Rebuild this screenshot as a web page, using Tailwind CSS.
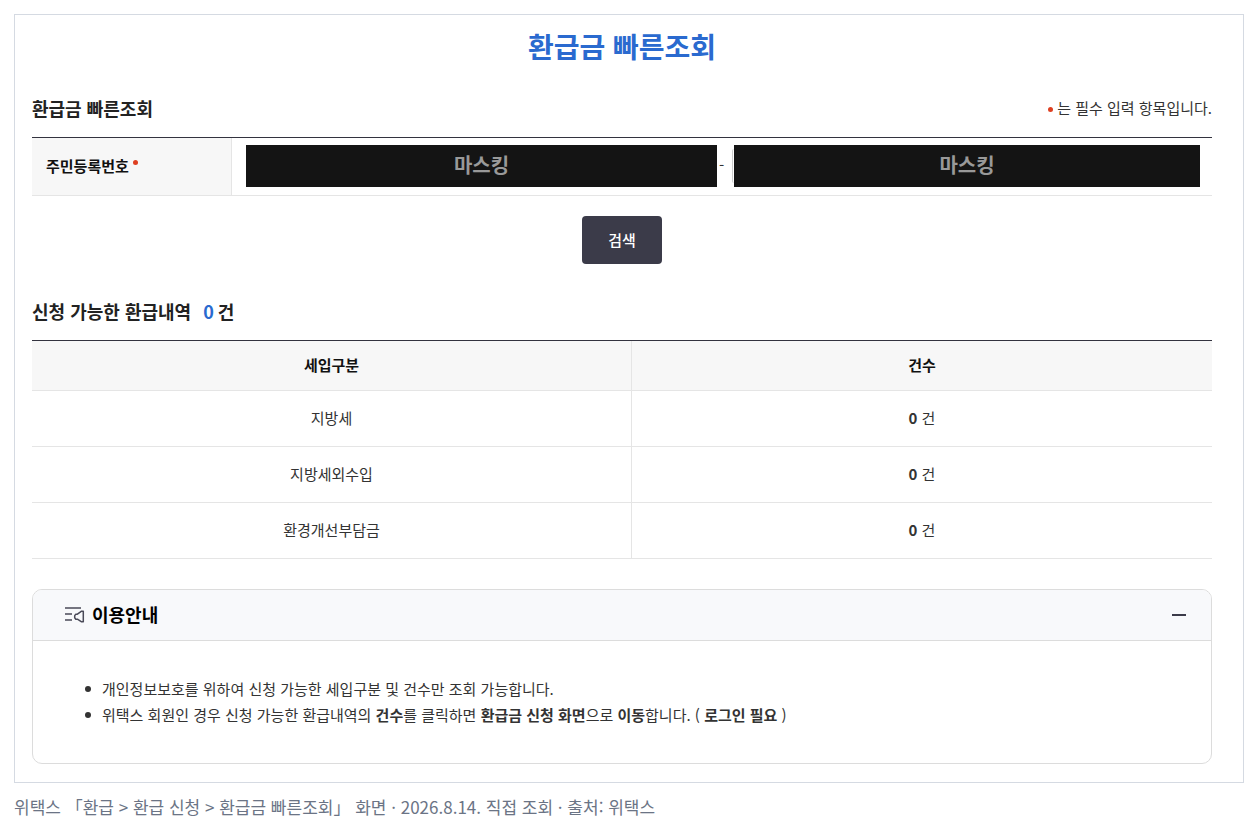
<!DOCTYPE html>
<html lang="ko">
<head>
  <meta charset="UTF-8">
  <meta name="viewport" content="width=device-width, initial-scale=1.0">
  <title>환급금 빠른조회</title>
  <script src="https://cdn.jsdelivr.net/npm/@tailwindcss/browser@4"></script>
</head>
<body class="bg-white font-['Noto_Sans_CJK_KR',sans-serif] text-[15px] text-[#333333]">

  <figure class="py-[14px] pr-[13px] pl-[14px]">
    <main class="border border-[#d5dae2] bg-white pt-[11px] pb-[18px] pl-[17px] pr-[31px]">
      <h1 class="text-center text-[28px] leading-10 font-bold text-[#2a6acf]">환급금 빠른조회</h1>

      <!-- Search form -->
      <form onsubmit="return false">
        <div class="mt-7 flex items-center justify-between">
          <h2 class="text-lg leading-7 font-bold text-[#222222]">환급금 빠른조회</h2>
          <p class="flex items-center gap-1 leading-7">
            <span class="mt-0.5 size-[5px] rounded-full bg-[#de3f21]"></span>
            <span>는 필수 입력 항목입니다.</span>
          </p>
        </div>

        <table class="mt-[15px] w-full table-fixed border-separate border-spacing-0 border-t border-[#33333f]">
          <tbody>
            <tr>
              <th scope="row" class="h-[58px] w-[200px] border-r border-b border-[#e5e5e5] bg-[#f7f7f7] pl-[14px] text-left font-bold text-[#111111]">
                <label for="rrn-front" class="flex items-center gap-1">
                  주민등록번호
                  <span class="mb-2 size-[5px] rounded-full bg-[#de3f21]"></span>
                </label>
              </th>
              <td class="border-b border-[#e5e5e5] pr-3 pb-0.5 pl-[14px]">
                <div class="grid grid-cols-[471fr_15px_468fr] items-center">
                  <input id="rrn-front" type="text" value="마스킹" readonly class="h-[42px] w-full min-w-0 bg-[#141414] pb-0.5 text-center text-xl font-bold text-[#999999]">
                  <span class="pl-0.5">-</span>
                  <div class="flex items-center">
                    <span class="h-[34px] w-0.5 rounded-l-sm border-l border-[#cccccc]"></span>
                    <input id="rrn-back" type="text" value="마스킹" readonly aria-label="주민등록번호 뒷자리" class="h-[42px] min-w-0 flex-1 bg-[#141414] pb-0.5 text-center text-xl font-bold text-[#999999]">
                  </div>
                </div>
              </td>
            </tr>
          </tbody>
        </table>

        <div class="mt-5 flex justify-center">
          <button type="submit" class="h-12 rounded bg-[#3b3b49] px-[26px] font-medium text-white">검색</button>
        </div>
      </form>

      <!-- Refund list -->
      <h2 class="mt-[33px] flex gap-1 text-lg leading-7 font-bold text-[#222222]">
        <span>신청 가능한 환급내역</span>
        <span class="ml-2 text-[#2a6acf]">0</span>
        <span>건</span>
      </h2>

      <table class="mt-[15px] w-full table-fixed border-separate border-spacing-0 border-t border-[#33333f] text-center">
        <thead>
          <tr class="bg-[#f7f7f7] text-[#111111]">
            <th scope="col" class="h-[50px] w-[50.85%] border-r border-b border-[#e5e5e5] font-bold">세입구분</th>
            <th scope="col" class="border-b border-[#e5e5e5] font-bold">건수</th>
          </tr>
        </thead>
        <tbody>
          <tr>
            <td class="h-14 border-r border-b border-[#e5e5e5]">지방세</td>
            <td class="border-b border-[#e5e5e5]"><strong>0</strong> 건</td>
          </tr>
          <tr>
            <td class="h-14 border-r border-b border-[#e5e5e5]">지방세외수입</td>
            <td class="border-b border-[#e5e5e5]"><strong>0</strong> 건</td>
          </tr>
          <tr>
            <td class="h-14 border-r border-b border-[#e5e5e5]">환경개선부담금</td>
            <td class="border-b border-[#e5e5e5]"><strong>0</strong> 건</td>
          </tr>
        </tbody>
      </table>

      <!-- Usage guide -->
      <section class="mt-[30px] overflow-hidden rounded-[10px] border border-[#dcdcdc]">
        <h2>
          <button type="button" aria-expanded="true" aria-controls="guide" class="flex h-[51px] w-full items-center border-b border-[#dcdcdc] bg-[#f8f9fb] pr-[25px] pl-8 text-lg font-bold text-black">
            <svg class="mr-[7px] h-5 w-5" viewBox="0 0 20 20" fill="none" stroke="#4a4a58" stroke-width="1.5">
              <path d="M0 3H16M0 9H7M0 15H7" />
              <path d="M18.3 6.2V16.8H16.6L12.4 14.2H10.8L9.7 12.8V10.6L10.8 9.2H12.4L16.6 6.2Z" stroke-linejoin="round" />
            </svg>
            <span class="pb-[3px]">이용안내</span>
            <span class="ml-auto h-0.5 w-[14px] bg-[#3b3b49]"></span>
          </button>
        </h2>
        <ul id="guide" class="px-[52px] py-[35px] leading-[26px]">
          <li class="flex items-center gap-[11px]">
            <span class="size-1.5 shrink-0 rounded-full bg-[#333333]"></span>
            <p>개인정보보호를 위하여 신청 가능한 세입구분 및 건수만 조회 가능합니다.</p>
          </li>
          <li class="flex items-center gap-[11px]">
            <span class="size-1.5 shrink-0 rounded-full bg-[#333333]"></span>
            <p>위택스 회원인 경우 신청 가능한 환급내역의 <strong>건수</strong>를 클릭하면 <strong>환급금 신청 화면</strong>으로 <strong>이동</strong>합니다. ( <strong>로그인 필요</strong> )</p>
          </li>
        </ul>
      </section>
    </main>

    <figcaption class="mt-3 text-[17px] leading-6 text-[#6b7485]">위택스 「환급 &gt; 환급 신청 &gt; 환급금 빠른조회」 화면 · 2026.8.14. 직접 조회 · 출처: 위택스</figcaption>
  </figure>

</body>
</html>
